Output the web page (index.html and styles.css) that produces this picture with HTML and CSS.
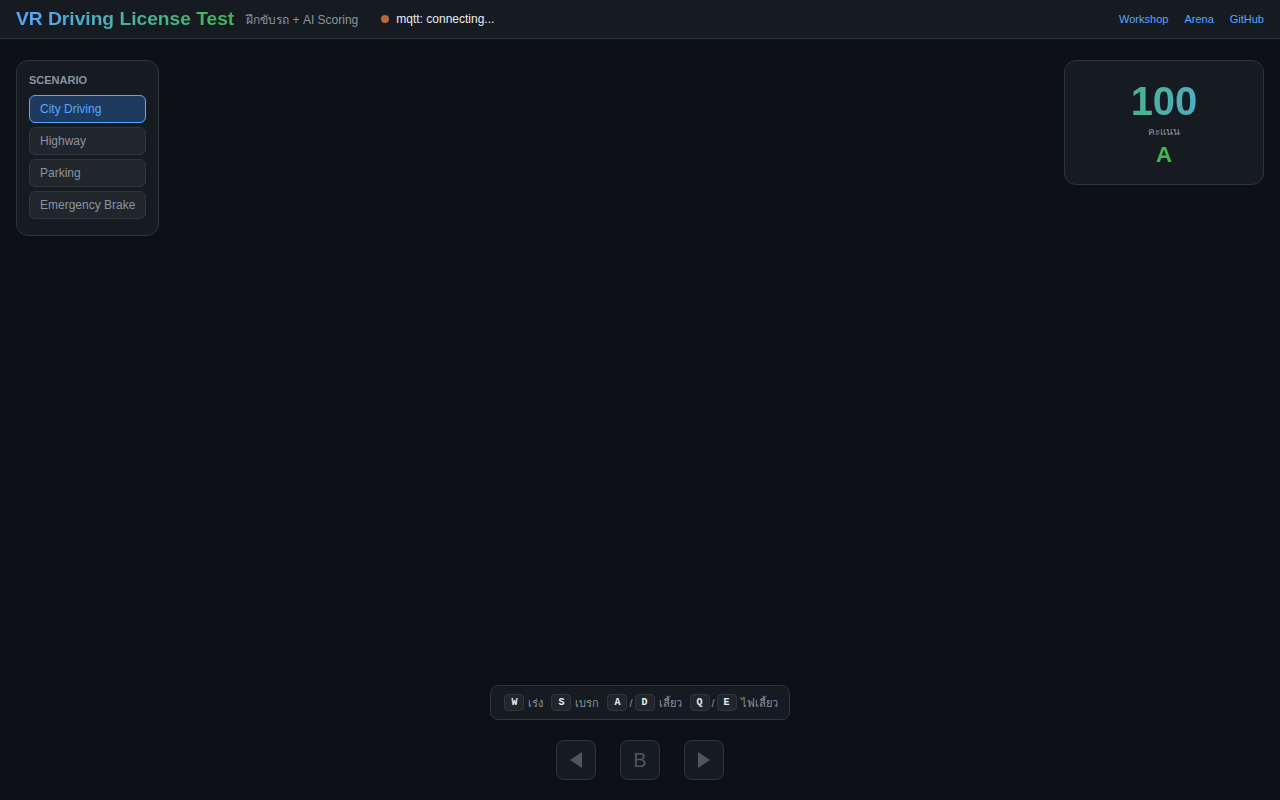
FILE: index.html
```html
<!DOCTYPE html>
<html lang="en">
<head>
  <meta charset="UTF-8" />
  <meta name="viewport" content="width=device-width, initial-scale=1.0"/>
  <title>VR Driving License Test</title>
  <link rel="stylesheet" href="styles.css">
</head>
<body>
  <header class="topbar">
    <div class="brand">
      <h1 class="title">VR Driving License Test</h1>
      <span class="subtitle">ฝึกขับรถ + AI Scoring</span>
      <span class="status"><span class="dot"></span>mqtt: connecting...</span>
    </div>
    <nav class="links">
      <a href="#">Workshop</a>
      <a href="#">Arena</a>
      <a href="#">GitHub</a>
    </nav>
  </header>

  <main class="stage">
    <div class="top-row">
      <div class="panel scenario">
        <div class="panel-title">SCENARIO</div>
        <button class="scn active">City Driving</button>
        <button class="scn">Highway</button>
        <button class="scn">Parking</button>
        <button class="scn">Emergency Brake</button>
      </div>

      <div class="panel score">
        <div class="score-num">100</div>
        <div class="score-label">คะแนน</div>
        <div class="grade">A</div>
      </div>
    </div>

    <div class="bottom">
      <div class="hints">
        <kbd>W</kbd><span>เร่ง</span>
        <kbd>S</kbd><span>เบรก</span>
        <kbd>A</kbd><i>/</i><kbd>D</kbd><span>เลี้ยว</span>
        <kbd>Q</kbd><i>/</i><kbd>E</kbd><span>ไฟเลี้ยว</span>
      </div>
      <div class="pad">
        <button class="padbtn" aria-label="left">
          <svg width="14" height="18" viewBox="0 0 14 18"><polygon points="13,1 13,17 1,9" fill="currentColor"/></svg>
        </button>
        <button class="padbtn">B</button>
        <button class="padbtn" aria-label="right">
          <svg width="14" height="18" viewBox="0 0 14 18"><polygon points="1,1 1,17 13,9" fill="currentColor"/></svg>
        </button>
      </div>
    </div>
  </main>
</body>
</html>
```

FILE: styles.css
```css
* {
  box-sizing: border-box;
}
html, body {
  height: 100%;
}
body {
  margin: 0;
  background: #0d1117;
  color: #c9d1d9;
  font-family: "Liberation Sans", Arial, "Noto Sans", sans-serif;
  display: flex;
  flex-direction: column;
  overflow: hidden;
}
.topbar {
  height: 39px;
  flex: none;
  display: flex;
  align-items: center;
  justify-content: space-between;
  padding: 0 16px;
  background: #161b22;
  border-bottom: 1px solid #30363d;
}
.brand {
  display: flex;
  align-items: center;
}
.title {
  margin: 0;
  font-size: 19.2px;
  font-weight: bold;
  background: linear-gradient(90deg, #58a6ff, #3fb950);
  -webkit-background-clip: text;
  background-clip: text;
  color: transparent;
}
.subtitle {
  margin-left: 12px;
  font-size: 12px;
  color: #8b949e;
}
.status {
  margin-left: 23px;
  font-size: 12px;
  color: #e6edf3;
  display: flex;
  align-items: center;
}
.dot {
  width: 8px;
  height: 8px;
  border-radius: 50%;
  background: #b5683a;
  margin-right: 7px;
}
.links {
  display: flex;
  gap: 16px;
}
.links a {
  font-size: 11px;
  color: #58a6ff;
  text-decoration: none;
}
.stage {
  flex: 1;
  display: flex;
  flex-direction: column;
  justify-content: space-between;
  padding: 21px 16px 20px;
}
.top-row {
  display: flex;
  justify-content: space-between;
  align-items: flex-start;
}
.panel {
  background: #161b22;
  border: 1px solid #30363d;
  border-radius: 12px;
}
.scenario {
  width: 143px;
  padding: 12px 12px 16px;
  display: flex;
  flex-direction: column;
  gap: 4px;
}
.panel-title {
  font-size: 11px;
  font-weight: bold;
  color: #8b949e;
  margin-top: 1px;
  margin-bottom: 5px;
}
.scn {
  height: 28px;
  text-align: left;
  padding: 0 10px;
  white-space: nowrap;
  font-family: inherit;
  font-size: 12px;
  color: #8b949e;
  background: #21262d;
  border: 1px solid #30363d;
  border-radius: 6px;
}
.scn.active {
  background: #1f3a5f;
  border-color: #58a6ff;
  color: #58a6ff;
}
.score {
  width: 200px;
  height: 125px;
  display: flex;
  flex-direction: column;
  align-items: center;
  padding-top: 18px;
}
.score-num {
  align-self: stretch;
  text-align: center;
  font-size: 40px;
  font-weight: bold;
  line-height: 44px;
  background: linear-gradient(90deg, #3fb950, #58a6ff);
  -webkit-background-clip: text;
  background-clip: text;
  color: transparent;
}
.score-label {
  font-size: 10px;
  color: #8b949e;
  margin-top: 1px;
}
.grade {
  font-size: 22px;
  font-weight: bold;
  color: #3fb950;
  line-height: 26px;
  margin-top: 3px;
}
.bottom {
  display: flex;
  flex-direction: column;
  align-items: center;
  gap: 20px;
}
.hints {
  height: 35px;
  display: flex;
  align-items: center;
  padding: 0 11px 0 13px;
  background: #161b22;
  border: 1px solid #30363d;
  border-radius: 8px;
  font-size: 11px;
  color: #8b949e;
}
.hints kbd {
  font-family: "Liberation Mono", "DejaVu Sans Mono", monospace;
  font-size: 10px;
  font-weight: bold;
  color: #e6edf3;
  background: #21262d;
  border: 1px solid #30363d;
  border-radius: 4px;
  padding: 2px 6px;
  margin-right: 4px;
}
.hints span {
  margin-right: 8px;
}
.hints span:last-child {
  margin-right: 0;
}
.hints i {
  font-style: normal;
  margin-right: 2px;
  margin-left: -2px;
}
.pad {
  display: flex;
  gap: 24px;
}
.padbtn {
  width: 40px;
  height: 40px;
  display: flex;
  align-items: center;
  justify-content: center;
  background: #161b22;
  border: 1px solid #30363d;
  border-radius: 8px;
  color: #4e5660;
  font-family: inherit;
  font-size: 20px;
}
```
